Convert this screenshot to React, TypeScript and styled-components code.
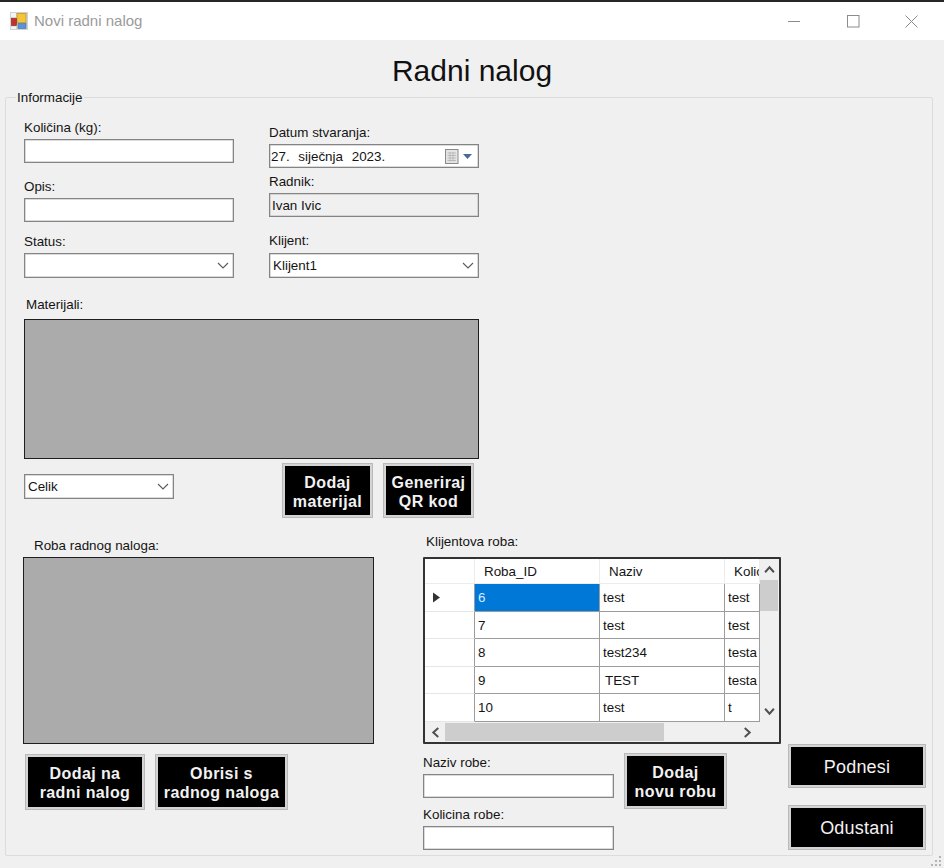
import styled, { createGlobalStyle } from 'styled-components'

const GlobalStyle = createGlobalStyle`
  html, body {
    margin: 0;
    padding: 0;
    background: #f0f0f0;
  }
  * {
    box-sizing: border-box;
  }
`

const Window = styled.div`
  width: 944px;
  height: 868px;
  display: flex;
  flex-direction: column;
  position: relative;
  overflow: hidden;
  background: #f0f0f0;
  border-top: 2px solid #262626;
  font-family: 'Liberation Sans', Arial, sans-serif;
  font-size: 13.4px;
  line-height: 15px;
  color: #141414;
`

const TitleBar = styled.div`
  height: 38px;
  flex: none;
  display: flex;
  align-items: center;
  padding: 0 3px 0 10px;
  background: #fff;
`

const TitleText = styled.span`
  margin: 0 0 2px 6px;
  font-size: 15px;
  color: #9a9a9a;
`

const Controls = styled.div`
  margin-left: auto;
  display: flex;
`

const ControlButton = styled.div`
  width: 58.5px;
  height: 38px;
  display: flex;
  align-items: center;
  justify-content: center;
`

const Heading = styled.h1`
  margin: 12px 0 0;
  height: 38px;
  font-size: 30px;
  line-height: 38px;
  font-weight: 400;
  text-align: center;
  color: #111;
`

const GroupBox = styled.div`
  width: 928px;
  height: 759px;
  margin: 7px 0 0 5px;
  padding: 0 0 0 18px;
  border: 1px solid #dcdcdc;
  border-radius: 2px;
`

const Legend = styled.div`
  width: fit-content;
  margin: -8px 0 0 -8px;
  padding: 0 1px;
  background: #f0f0f0;
`

const TopForm = styled.div`
  display: flex;
  gap: 35px;
  margin-top: 15px;
`

const FieldColumn = styled.div<{ $top?: number }>`
  width: 210px;
  display: flex;
  flex-direction: column;
  padding-top: ${({ $top }) => $top ?? 0}px;
`

const Label = styled.label<{ $top?: number; $left?: number; $gap?: number }>`
  display: block;
  margin: ${({ $top }) => $top ?? 0}px 0 ${({ $gap }) => $gap ?? 4}px ${({ $left }) => $left ?? 0}px;
`

const TextBox = styled.div<{ $readOnly?: boolean }>`
  width: 100%;
  height: 24px;
  flex: none;
  display: flex;
  align-items: center;
  padding: 0 2px;
  border: 1px solid #848484;
  box-shadow: inset 0 0 0 0.5px #b8b8b8;
  background: ${({ $readOnly }) => ($readOnly ? '#f0f0f0' : '#fff')};
`

const DateBox = styled(TextBox)`
  padding: 0 5px 0 1px;
`

const DateValue = styled.span`
  flex: 1;
  word-spacing: 5px;
`

const ComboBox = styled.div<{ $width?: number; $top?: number }>`
  width: ${({ $width }) => ($width ? `${$width}px` : '100%')};
  height: 25px;
  flex: none;
  margin-top: ${({ $top }) => $top ?? 0}px;
  display: flex;
  align-items: center;
  justify-content: space-between;
  padding: 0 4px 0 3px;
  border: 1px solid #848484;
  box-shadow: inset 0 0 0 0.5px #b8b8b8;
  background: #fff;
`

const ListPanel = styled.div<{ $width: number; $height: number }>`
  width: ${({ $width }) => $width}px;
  height: ${({ $height }) => $height}px;
  background: #ababab;
  border: 1.5px solid #1e1e1e;
`

const MaterialRow = styled.div`
  display: flex;
  align-items: flex-start;
  margin-top: 4px;
`

const ButtonGroup = styled.div<{ $left?: number; $top?: number }>`
  display: flex;
  gap: 10px;
  margin: ${({ $top }) => $top ?? 0}px 0 0 ${({ $left }) => $left ?? 0}px;
`

const ActionButton = styled.div<{ $width: number; $height: number; $plain?: boolean }>`
  width: ${({ $width }) => $width}px;
  height: ${({ $height }) => $height}px;
  flex: none;
  display: flex;
  align-items: center;
  justify-content: center;
  text-align: center;
  white-space: nowrap;
  padding-top: 2px;
  background: #000;
  color: #f2f2f2;
  border: 1px solid #b9b9b9;
  box-shadow: inset 0 0 0 2px #d4d4d4;
  font-size: ${({ $plain }) => ($plain ? 18 : 16)}px;
  font-weight: ${({ $plain }) => ($plain ? 400 : 700)};
  letter-spacing: ${({ $plain }) => ($plain ? 0.2 : 0.4)}px;
  line-height: 19px;
`

const BottomRow = styled.div`
  display: flex;
  margin: 16px 0 0 -1px;
`

const LeftColumn = styled.div`
  width: 400px;
  flex: none;
  padding-top: 4px;
`

const MiddleColumn = styled.div`
  width: 358px;
  flex: none;
`

const RightColumn = styled.div`
  margin-left: 7px;
  display: flex;
  flex-direction: column;
  justify-content: flex-end;
  gap: 17px;
`

const DataGrid = styled.div`
  width: 358px;
  height: 187px;
  display: grid;
  grid-template-columns: 1fr 19px;
  grid-template-rows: 1fr 20px;
  border: 2px solid #333;
  border-radius: 1px;
  background: #f0f0f0;
`

const Rows = styled.div`
  display: grid;
  grid-template-columns: 50px 125px 125px 35px;
  grid-template-rows: 25px repeat(5, 27.5px);
  overflow: hidden;
  background: #fff;
`

const HeaderCell = styled.div`
  display: flex;
  align-items: center;
  padding-left: 9px;
  overflow: hidden;
  white-space: nowrap;
  background: #fff;
  border-right: 1.5px solid #ececec;
  border-bottom: 1.5px solid #ececec;
`

const RowHeader = styled.div`
  display: flex;
  align-items: center;
  padding-left: 7px;
  background: #fff;
  border-right: 1.5px solid #9c9c9c;
  border-bottom: 1.5px solid #e6e6e6;
`

const Cell = styled.div<{ $selected?: boolean; $indent?: number }>`
  display: flex;
  align-items: center;
  padding: 1px 0 0 ${({ $indent }) => $indent ?? 3}px;
  overflow: hidden;
  white-space: nowrap;
  background: ${({ $selected }) => ($selected ? '#0078d7' : '#fff')};
  color: ${({ $selected }) => ($selected ? '#d6ecff' : '#141414')};
  border-right: 1.5px solid #9c9c9c;
  border-bottom: 1.5px solid #9c9c9c;
`

const VerticalBar = styled.div`
  display: flex;
  flex-direction: column;
  padding-right: 1px;
  background: #f0f0f0;
`

const HorizontalBar = styled.div`
  display: flex;
  padding-right: 3px;
  background: #f0f0f0;
`

const ArrowButton = styled.div<{ $vertical?: boolean }>`
  flex: none;
  width: ${({ $vertical }) => ($vertical ? '100%' : '20px')};
  height: ${({ $vertical }) => ($vertical ? '21px' : '100%')};
  display: flex;
  align-items: center;
  justify-content: center;
`

const VerticalThumb = styled.div`
  height: 31px;
  background: #cdcdcd;
`

const HorizontalThumb = styled.div`
  width: 219px;
  margin: 1px 0;
  background: #cdcdcd;
`

const Spacer = styled.div`
  flex: 1;
`

const Corner = styled.div`
  background: #f0f0f0;
`

const AddGoodsRow = styled.div`
  display: flex;
  align-items: flex-start;
  margin-top: 11px;
`

const AddGoodsFields = styled.div`
  width: 191px;
  flex: none;
  display: flex;
  flex-direction: column;
`

const AddGoodsButton = styled.div`
  margin: -2px 0 0 10px;
`

const ResizeGrip = styled.svg`
  position: absolute;
  right: 1px;
  bottom: 0;
`

const Arrow = ({ dir }: { dir: 'up' | 'down' | 'left' | 'right' }) => {
  const paths = {
    up: 'M1 7.5 L5 3 L9 7.5',
    down: 'M1 2.5 L5 7 L9 2.5',
    left: 'M7.5 1 L3 5 L7.5 9',
    right: 'M2.5 1 L7 5 L2.5 9',
  }
  return (
    <svg width="11" height="11" viewBox="0 0 10 10" fill="none">
      <path d={paths[dir]} stroke="#505050" strokeWidth="1.8" />
    </svg>
  )
}

const DropChevron = () => (
  <svg width="12" height="7" viewBox="0 0 12 7" fill="none">
    <path d="M1 1 L6 6 L11 1" stroke="#5a5a5a" strokeWidth="1.1" />
  </svg>
)

const AppIcon = () => (
  <svg width="18" height="18" viewBox="0 0 18 18">
    <rect x="0" y="0" width="18" height="18" fill="#d2d2d2" />
    <rect x="1" y="1" width="5" height="4" fill="#f4f4f4" />
    <rect x="7" y="1.5" width="9" height="9" fill="#f3c63a" stroke="#c39a28" strokeWidth="0.8" />
    <rect x="1.5" y="6.5" width="5" height="7" fill="#c4302b" stroke="#8a1f1b" strokeWidth="0.6" />
    <rect x="8" y="11.5" width="8" height="5" fill="#5b93d8" stroke="#3e6ea8" strokeWidth="0.6" />
    <rect x="1" y="14.5" width="5" height="2.5" fill="#f4f4f4" />
  </svg>
)

const CalendarIcon = () => (
  <svg width="28" height="15" viewBox="0 0 28 15" fill="none">
    <rect x="0.5" y="0.5" width="12.5" height="14" fill="#e4e4e4" stroke="#8a8a8a" />
    <path d="M2.5 4 H11 M2.5 6.5 H11 M2.5 9 H11 M2.5 11.5 H11 M5 3 V12.5 M8 3 V12.5" stroke="#b0b0b0" strokeWidth="0.8" />
    <path d="M18 5 H27 L22.5 10 Z" fill="#4b6a96" />
  </svg>
)

type RowData = { id: string; name: string; qty: string; selected?: boolean; nameIndent?: number }

const rows: RowData[] = [
  { id: '6', name: 'test', qty: 'test', selected: true },
  { id: '7', name: 'test', qty: 'test' },
  { id: '8', name: 'test234', qty: 'testa' },
  { id: '9', name: 'TEST', qty: 'testa', nameIndent: 5 },
  { id: '10', name: 'test', qty: 't' },
]

const RowContent = ({ row }: { row: RowData }) => (
  <>
    <RowHeader>
      {row.selected && (
        <svg width="9" height="11" viewBox="0 0 9 11">
          <path d="M1 0.5 L8 5.5 L1 10.5 Z" fill="#333" />
        </svg>
      )}
    </RowHeader>
    <Cell $selected={row.selected}>{row.id}</Cell>
    <Cell $indent={row.nameIndent}>{row.name}</Cell>
    <Cell>{row.qty}</Cell>
  </>
)

const App = () => {
  return (
    <Window>
      <GlobalStyle />
      <TitleBar>
        <AppIcon />
        <TitleText>Novi radni nalog</TitleText>
        <Controls>
          <ControlButton>
            <svg width="13" height="13" viewBox="0 0 13 13">
              <path d="M0 6.5 H12" stroke="#8c8c8c" />
            </svg>
          </ControlButton>
          <ControlButton>
            <svg width="13" height="13" viewBox="0 0 13 13" fill="none">
              <rect x="0.5" y="0.5" width="11.5" height="11.5" stroke="#8c8c8c" />
            </svg>
          </ControlButton>
          <ControlButton>
            <svg width="13" height="13" viewBox="0 0 13 13" fill="none">
              <path d="M0.5 0.5 L12.5 12.5 M12.5 0.5 L0.5 12.5" stroke="#8c8c8c" />
            </svg>
          </ControlButton>
        </Controls>
      </TitleBar>

      <Heading>Radni nalog</Heading>

      <GroupBox>
        <Legend>Informacije</Legend>

        <TopForm>
          <FieldColumn>
            <Label>Količina (kg):</Label>
            <TextBox />
            <Label $top={16}>Opis:</Label>
            <TextBox />
            <Label $top={12}>Status:</Label>
            <ComboBox>
              <span />
              <DropChevron />
            </ComboBox>
          </FieldColumn>
          <FieldColumn $top={5}>
            <Label>Datum stvaranja:</Label>
            <DateBox>
              <DateValue>27. siječnja 2023.</DateValue>
              <CalendarIcon />
            </DateBox>
            <Label $top={6}>Radnik:</Label>
            <TextBox $readOnly>Ivan Ivic</TextBox>
            <Label $top={16} $gap={5}>Klijent:</Label>
            <ComboBox>
              <span>Klijent1</span>
              <DropChevron />
            </ComboBox>
          </FieldColumn>
        </TopForm>

        <Label $top={19} $left={2} $gap={7}>Materijali:</Label>
        <ListPanel $width={455} $height={140} />

        <MaterialRow>
          <ComboBox $width={150} $top={11}>
            <span>Celik</span>
            <DropChevron />
          </ComboBox>
          <ButtonGroup $left={108}>
            <ActionButton $width={91} $height={55}>Dodaj<br />materijal</ActionButton>
            <ActionButton $width={91} $height={55}>Generiraj<br />QR kod</ActionButton>
          </ButtonGroup>
        </MaterialRow>

        <BottomRow>
          <LeftColumn>
            <Label $left={11}>Roba radnog naloga:</Label>
            <ListPanel $width={351} $height={187} />
            <ButtonGroup $left={2} $top={10}>
              <ActionButton $width={120} $height={56}>Dodaj na<br />radni nalog</ActionButton>
              <ActionButton $width={133} $height={56}>Obrisi s<br />radnog naloga</ActionButton>
            </ButtonGroup>
          </LeftColumn>

          <MiddleColumn>
            <Label $left={3} $gap={8}>Klijentova roba:</Label>
            <DataGrid>
              <Rows>
                <HeaderCell />
                <HeaderCell>Roba_ID</HeaderCell>
                <HeaderCell>Naziv</HeaderCell>
                <HeaderCell>Kolicina</HeaderCell>
                {rows.map((row) => (
                  <RowContent key={row.id} row={row} />
                ))}
              </Rows>
              <VerticalBar>
                <ArrowButton $vertical>
                  <Arrow dir="up" />
                </ArrowButton>
                <VerticalThumb />
                <Spacer />
                <ArrowButton $vertical>
                  <Arrow dir="down" />
                </ArrowButton>
              </VerticalBar>
              <HorizontalBar>
                <ArrowButton>
                  <Arrow dir="left" />
                </ArrowButton>
                <HorizontalThumb />
                <Spacer />
                <ArrowButton>
                  <Arrow dir="right" />
                </ArrowButton>
              </HorizontalBar>
              <Corner />
            </DataGrid>

            <AddGoodsRow>
              <AddGoodsFields>
                <Label>Naziv robe:</Label>
                <TextBox />
                <Label $top={9}>Kolicina robe:</Label>
                <TextBox />
              </AddGoodsFields>
              <AddGoodsButton>
                <ActionButton $width={103} $height={56}>Dodaj<br />novu robu</ActionButton>
              </AddGoodsButton>
            </AddGoodsRow>
          </MiddleColumn>

          <RightColumn>
            <ActionButton $width={138} $height={44} $plain>Podnesi</ActionButton>
            <ActionButton $width={138} $height={45} $plain>Odustani</ActionButton>
          </RightColumn>
        </BottomRow>
      </GroupBox>

      <ResizeGrip width="13" height="13" viewBox="0 0 13 13">
        <g fill="#b4b4b4">
          <rect x="9" y="1" width="2" height="2" />
          <rect x="5" y="5" width="2" height="2" />
          <rect x="9" y="5" width="2" height="2" />
          <rect x="1" y="9" width="2" height="2" />
          <rect x="5" y="9" width="2" height="2" />
          <rect x="9" y="9" width="2" height="2" />
        </g>
      </ResizeGrip>
    </Window>
  )
}

export default App
